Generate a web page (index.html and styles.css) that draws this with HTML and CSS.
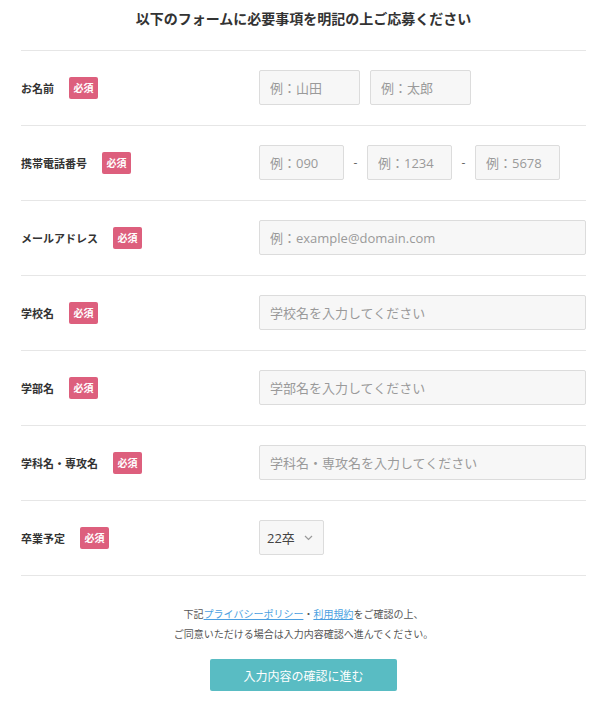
FILE: index.html
```html
<!DOCTYPE html>
<html lang="ja">
<head>
  <meta charset="UTF-8">
  <meta name="viewport" content="width=device-width, initial-scale=1.0">
  <title>応募フォーム</title>
  <link rel="stylesheet" href="styles.css">
</head>
<body>
  <div class="container">
    <h1 class="form-title">以下のフォームに必要事項を明記の上ご応募ください</h1>

    <form class="entry-form">
      <div class="form-row">
        <div class="label">お名前<span class="required">必須</span></div>
        <div class="field">
          <input class="input input-name" type="text" placeholder="例：山田">
          <input class="input input-name" type="text" placeholder="例：太郎">
        </div>
      </div>

      <div class="form-row">
        <div class="label">携帯電話番号<span class="required">必須</span></div>
        <div class="field">
          <input class="input input-tel" type="text" placeholder="例：090">
          <span class="dash">-</span>
          <input class="input input-tel" type="text" placeholder="例：1234">
          <span class="dash">-</span>
          <input class="input input-tel" type="text" placeholder="例：5678">
        </div>
      </div>

      <div class="form-row">
        <div class="label">メールアドレス<span class="required">必須</span></div>
        <div class="field">
          <input class="input input-full" type="text" placeholder="例：example@domain.com">
        </div>
      </div>

      <div class="form-row">
        <div class="label">学校名<span class="required">必須</span></div>
        <div class="field">
          <input class="input input-full" type="text" placeholder="学校名を入力してください">
        </div>
      </div>

      <div class="form-row">
        <div class="label">学部名<span class="required">必須</span></div>
        <div class="field">
          <input class="input input-full" type="text" placeholder="学部名を入力してください">
        </div>
      </div>

      <div class="form-row">
        <div class="label">学科名・専攻名<span class="required">必須</span></div>
        <div class="field">
          <input class="input input-full" type="text" placeholder="学科名・専攻名を入力してください">
        </div>
      </div>

      <div class="form-row form-row-last">
        <div class="label">卒業予定<span class="required">必須</span></div>
        <div class="field">
          <div class="select-box">
            <span class="select-value">22卒</span>
            <svg class="chevron" width="9" height="6" viewBox="0 0 9 6">
              <path d="M1 1 L4.5 4.5 L8 1" fill="none" stroke="#999" stroke-width="1.2"/>
            </svg>
          </div>
        </div>
      </div>

      <p class="note">
        下記<a href="#">プライバシーポリシー</a>・<a href="#">利用規約</a>をご確認の上、<br>
        ご同意いただける場合は入力内容確認へ進んでください。
      </p>

      <div class="submit-wrap">
        <button type="button" class="submit-btn">入力内容の確認に進む</button>
      </div>
    </form>
  </div>
</body>
</html>
```

FILE: styles.css
```css
body {
  margin: 0;
  padding: 0;
  background: #fff;
  color: #333;
  font-family: "Open Sans", "Noto Sans CJK JP", sans-serif;
}
.container {
  padding: 0 22px 0 21px;
}
.form-title {
  margin: 0;
  padding: 8px 0 0;
  height: 42px;
  font-size: 14px;
  line-height: 20px;
  font-weight: bold;
  text-align: center;
  color: #333;
  font-family: "Noto Sans CJK JP", sans-serif;
}
.form-row {
  display: grid;
  grid-template-columns: 238px 1fr;
  align-items: center;
  border-top: 1px solid #e6e6e6;
  padding: 19px 0 20px;
}
.form-row-last {
  border-bottom: 1px solid #e6e6e6;
}
.label {
  display: flex;
  align-items: center;
  font-size: 11px;
  font-weight: bold;
  color: #333;
  font-family: "Noto Sans CJK JP", sans-serif;
}
.required {
  display: inline-block;
  margin-left: 15px;
  width: 29px;
  height: 22px;
  line-height: 22px;
  text-align: center;
  background: #dd5f7d;
  color: #fff;
  border-radius: 2px;
  font-size: 10px;
  font-weight: bold;
  font-family: "Noto Sans CJK JP", serif;
}
.field {
  display: flex;
  align-items: center;
}
.input {
  box-sizing: border-box;
  height: 35px;
  padding: 0 10px;
  border: 1px solid #dcdcdc;
  border-radius: 2px;
  background: #f7f7f7;
  font-size: 13px;
  color: #333;
  font-family: "Open Sans", "Noto Sans CJK JP", sans-serif;
}
.input::placeholder {
  color: #9a9a9a;
}
.input-name {
  width: 101px;
  margin-right: 10px;
}
.input-tel {
  width: 85px;
}
.dash {
  width: 23px;
  text-align: center;
  font-size: 12px;
  color: #666;
}
.input-full {
  width: 100%;
}
.select-box {
  box-sizing: border-box;
  width: 65px;
  height: 35px;
  padding: 0 10px 0 7px;
  display: flex;
  align-items: center;
  justify-content: space-between;
  border: 1px solid #dcdcdc;
  border-radius: 2px;
  background: #f7f7f7;
}
.select-value {
  font-size: 13px;
  color: #444;
  font-family: "Open Sans", "Noto Sans CJK JP", sans-serif;
}
.note {
  margin: 28px 0 0;
  text-align: center;
  font-size: 10px;
  line-height: 20px;
  color: #555;
  font-family: "Noto Sans CJK JP", sans-serif;
}
.note a {
  color: #4b9fe1;
  text-decoration: underline;
}
.submit-wrap {
  display: flex;
  justify-content: center;
  padding: 15px 0 0;
}
.submit-btn {
  width: 187px;
  height: 32px;
  border: none;
  border-radius: 2px;
  background: #59bcc3;
  color: #fff;
  font-size: 12px;
  font-family: "Noto Sans CJK JP", sans-serif;
  cursor: pointer;
}
```
